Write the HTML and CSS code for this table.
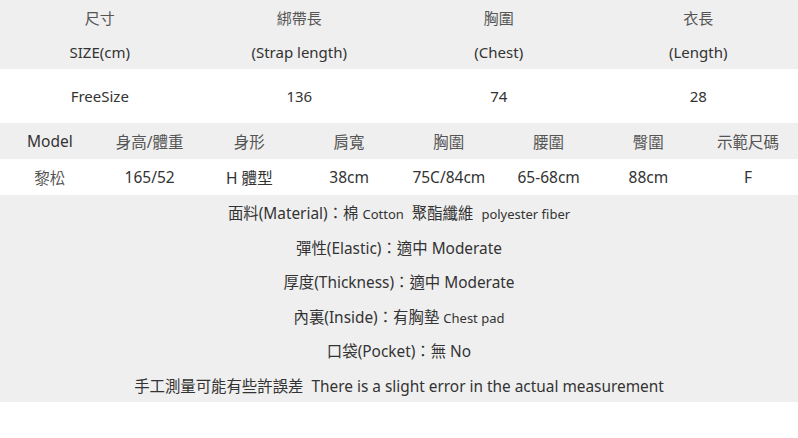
FILE: index.html
```html
<!DOCTYPE html>
<html lang="zh-Hant">
<head>
<meta charset="utf-8">
<link rel="stylesheet" href="styles.css">
</head>
<body>
<div class="page">
  <div class="size-head">
    <div class="row4 h1"><span>尺寸</span><span>綁帶長</span><span>胸圍</span><span>衣長</span></div>
    <div class="row4 h2"><span>SIZE(cm)</span><span>(Strap length)</span><span>(Chest)</span><span>(Length)</span></div>
  </div>
  <div class="row4 size-val"><span>FreeSize</span><span>136</span><span>74</span><span>28</span></div>
  <div class="row8 model-head"><span class="latin">Model</span><span>身高/體重</span><span>身形</span><span>肩寬</span><span>胸圍</span><span>腰圍</span><span>臀圍</span><span>示範尺碼</span></div>
  <div class="row8 model-val"><span class="cjk">黎松</span><span>165/52</span><span>H 體型</span><span>38cm</span><span>75C/84cm</span><span>65-68cm</span><span>88cm</span><span>F</span></div>
  <div class="info">
    <p>面料(Material)：棉 <small>Cotton</small>&nbsp; 聚酯纖維&nbsp; <small>polyester fiber</small></p>
    <p>彈性(Elastic)：適中 Moderate</p>
    <p>厚度(Thickness)：適中 Moderate</p>
    <p>內裏(Inside)：有胸墊 <small>Chest pad</small></p>
    <p>口袋(Pocket)：無 No</p>
    <p>手工測量可能有些許誤差&nbsp; There is a slight error in the actual measurement</p>
  </div>
</div>
</body>
</html>
```

FILE: styles.css
```css
* { box-sizing: border-box; margin: 0; padding: 0; }
html, body { background: #fff; }
body {
  margin: 0;
  font-family: "Noto Sans", "Noto Sans CJK TC", sans-serif;
  font-size: 15px;
  color: #333;
}
.page { width: 798px; }
.size-head { background: #efefef; height: 69px; display: flex; flex-direction: column; }
.row4 { display: grid; grid-template-columns: repeat(4, 1fr); text-align: center; align-items: center; }
.row8 { display: grid; grid-template-columns: repeat(8, 1fr); text-align: center; align-items: center; font-size: 15.5px; }
.h1 { height: 35px; color: #555; }
.h2 { height: 34px; }
.size-val { height: 54px; }
.model-head { height: 36px; background: #efefef; }
.model-head span { color: #555; }
.model-head span.latin { color: #333; }
.model-val { height: 36px; }
.cjk { color: #555; }
.info { background: #efefef; height: 207px; display: flex; flex-direction: column; align-items: center; padding-top: 2px; font-size: 15.4px; }
.info p { height: 34.5px; line-height: 34.5px; white-space: nowrap; }
.info small { font-size: 13px; }
```
